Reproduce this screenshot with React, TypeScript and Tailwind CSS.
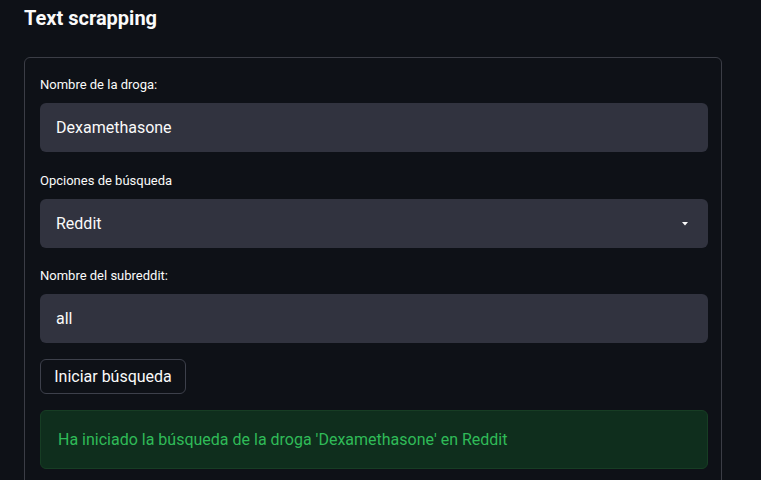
import React from "react";

const font = { fontFamily: "Roboto, 'Noto Sans', sans-serif" };

function Label({ children }: { children: React.ReactNode }) {
  return <div className="text-[13px] leading-[20px] text-[#fafafa] h-[20px]">{children}</div>;
}

function Field({ children, right }: { children: React.ReactNode; right?: React.ReactNode }) {
  return (
    <div className="mt-[8px] h-[49px] rounded-[6px] bg-[#31333f] flex items-center pl-[16px] pr-[20px] text-[16px] text-[#fafafa]">
      <span className="flex-1">{children}</span>
      {right}
    </div>
  );
}

export default function App() {
  return (
    <div className="min-h-[480px] bg-[#0e1117] overflow-hidden" style={font}>
      <div className="pl-[24px]">
        <h1 className="pt-[4px] h-[57px] text-[20px] leading-[28px] font-bold text-[#fafafa]">Text scrapping</h1>
        <div className="w-[698px] border border-[#3b3d46] rounded-[6px] pl-[15px] pr-[13px] pt-[17px] pb-[20px] h-[440px]">
          <Label>Nombre de la droga:</Label>
          <Field>Dexamethasone</Field>
          <div className="mt-[19px]"><Label>Opciones de búsqueda</Label></div>
          <Field
            right={
              <svg width="6" height="4" viewBox="0 0 6 4">
                <path d="M0 0 H6 L3 3.5 Z" fill="#fafafa" />
              </svg>
            }
          >
            Reddit
          </Field>
          <div className="mt-[18px]"><Label>Nombre del subreddit:</Label></div>
          <Field>all</Field>
          <button className="mt-[16px] h-[35px] w-[146px] rounded-[6px] border border-[#3d404b] bg-[#0e1117] text-[16px] text-[#fafafa]">
            Iniciar búsqueda
          </button>
          <div className="mt-[16px] h-[59px] rounded-[6px] border border-[#173d24] bg-[#0f2e1d] flex items-center pl-[17px] text-[16px] text-[#2fbb58]">
            Ha iniciado la búsqueda de la droga 'Dexamethasone' en Reddit
          </div>
        </div>
      </div>
    </div>
  );
}
